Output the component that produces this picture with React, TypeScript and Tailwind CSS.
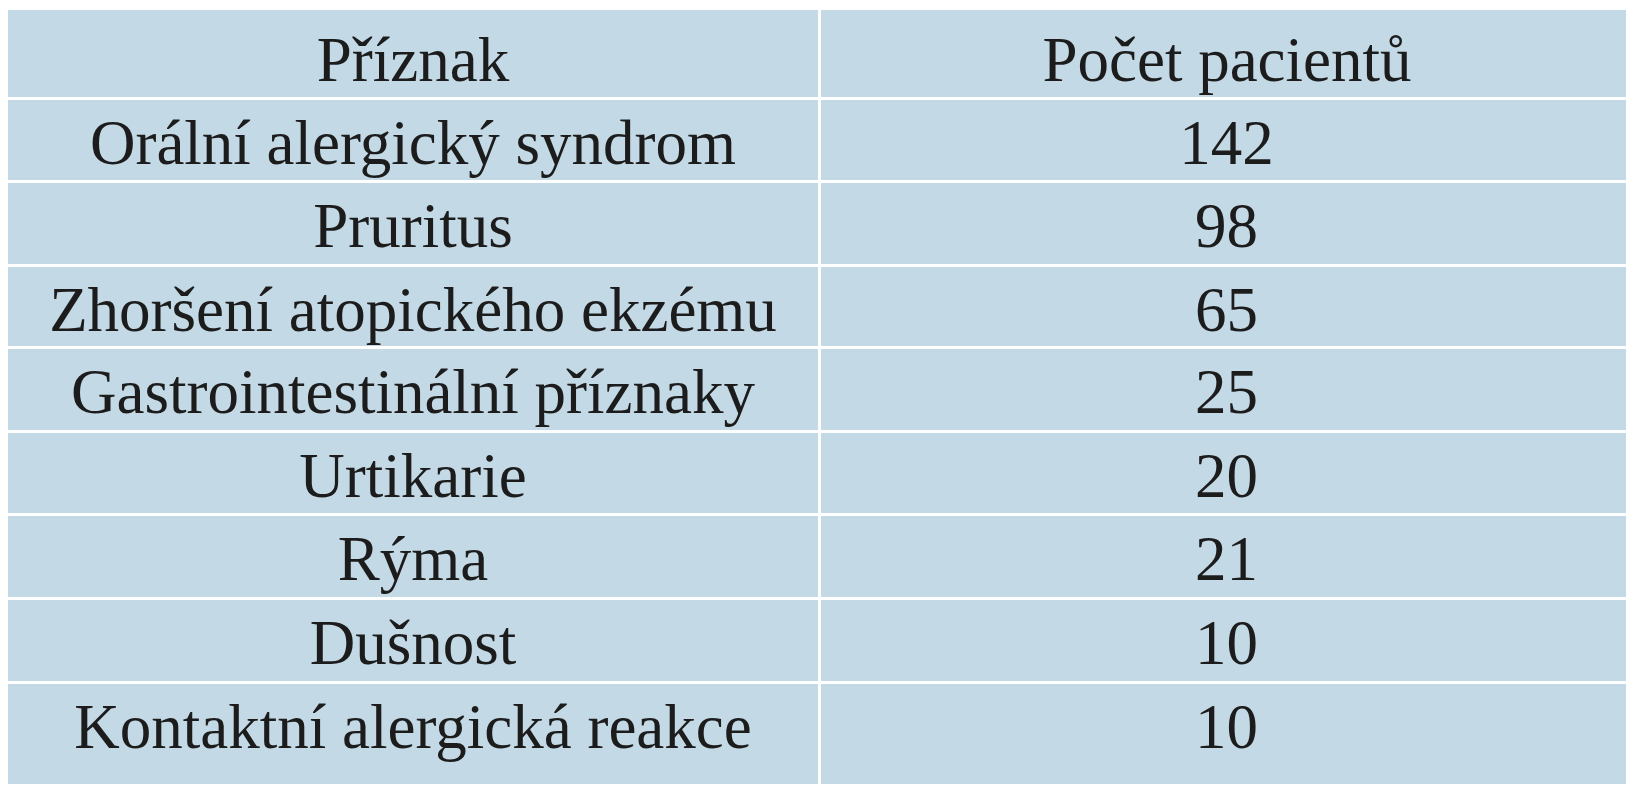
import { Fragment } from "react";

const rows: [string, string][] = [
  ["Orální alergický syndrom", "142"],
  ["Pruritus", "98"],
  ["Zhoršení atopického ekzému", "65"],
  ["Gastrointestinální příznaky", "25"],
  ["Urtikarie", "20"],
  ["Rýma", "21"],
  ["Dušnost", "10"],
  ["Kontaktní alergická reakce", "10"],
];

export default function App() {
  return (
    <div className="w-[1636px] h-[800px] bg-white pt-[10px] pl-[8px]">
      <div
        className="grid grid-cols-[810px_805px] grid-rows-[87px_80px_81px_79px_81px_80px_81px_81px_100px] gap-[3px] text-[63px] leading-none text-[#1c1c1c]"
        style={{ fontFamily: '"Liberation Serif", "Times New Roman", serif' }}
      >
        <div className="bg-[#c3d9e5] flex justify-center pt-[19px]">Příznak</div>
        <div className="bg-[#c3d9e5] flex justify-center pt-[19px] pl-[7px]">Počet pacientů</div>
        {rows.map(([name, count]) => (
          <Fragment key={name}>
            <div className="bg-[#c3d9e5] flex justify-center pt-[12px]">{name}</div>
            <div className="bg-[#c3d9e5] flex justify-center pt-[12px] pl-[6px]">{count}</div>
          </Fragment>
        ))}
      </div>
    </div>
  );
}
